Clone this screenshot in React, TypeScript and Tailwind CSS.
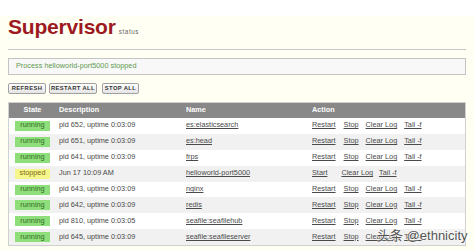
import React from "react";

type Row = {
  state: "running" | "stopped";
  desc: string;
  name: string;
};

const rows: Row[] = [
  { state: "running", desc: "pid 652, uptime 0:03:09", name: "es:elasticsearch" },
  { state: "running", desc: "pid 651, uptime 0:03:09", name: "es:head" },
  { state: "running", desc: "pid 641, uptime 0:03:09", name: "frps" },
  { state: "stopped", desc: "Jun 17 10:09 AM", name: "helloworld-port5000" },
  { state: "running", desc: "pid 643, uptime 0:03:09", name: "nginx" },
  { state: "running", desc: "pid 642, uptime 0:03:09", name: "redis" },
  { state: "running", desc: "pid 810, uptime 0:03:05", name: "seafile:seafilehub" },
  { state: "running", desc: "pid 645, uptime 0:03:09", name: "seafile:seafileserver" },
];

function Btn({ label, w }: { label: string; w: string }) {
  return (
    <div
      className={`${w} h-[11px] flex items-center justify-center rounded-[2px] border border-[#a0a0a0] bg-gradient-to-b from-white to-[#e4e4e4] text-[5.8px] font-bold tracking-[0.4px] text-[#333]`}
    >
      {label}
    </div>
  );
}

export default function App() {
  return (
    <div
      className="relative w-[474px] h-[251px] overflow-hidden bg-[#fffff3]"
      style={{ fontFamily: '"Liberation Sans", Arial, sans-serif' }}
    >
      <div className="h-[16px] bg-white" />
      <div className="px-[8px]">
        <div className="flex items-baseline leading-[21px] h-[22px]">
          <span className="text-[21px] font-bold text-[#9c1a1f] tracking-[-0.2px]">Supervisor</span>
          <span className="ml-[3px] text-[6.3px] tracking-[0.6px] text-[#666]">status</span>
        </div>
        <div className="mt-[11px] h-[1px] bg-[#c6c6c6]" />
        <div className="mt-[8px] h-[17px] flex items-center border border-[#c4c4c4] bg-[#f8f8f8] pl-[7px] text-[7.3px] text-[#5e9a4e]">
          Process helloworld-port5000 stopped
        </div>
        <div className="mt-[8px] flex">
          <Btn label="REFRESH" w="w-[38px]" />
          <div className="w-[3px]" />
          <Btn label="RESTART ALL" w="w-[48px]" />
          <div className="w-[5px]" />
          <Btn label="STOP ALL" w="w-[37px]" />
        </div>
        <div className="mt-[8px] border border-[#d0d0d0] bg-white text-[7.3px]">
          <div className="grid grid-cols-[47px_127px_126px_1fr] h-[15px] items-center bg-[#888888] text-white font-bold">
            <div className="text-center">State</div>
            <div className="pl-[3px]">Description</div>
            <div className="pl-[3px]">Name</div>
            <div className="pl-[3px]">Action</div>
          </div>
          {rows.map((r, i) => (
            <div
              key={i}
              className={`grid grid-cols-[47px_127px_126px_1fr] h-[15.9px] items-center ${
                i % 2 === 1 ? "bg-[#f1f1f1]" : "bg-white"
              }`}
            >
              <div className="flex justify-center">
                {r.state === "running" ? (
                  <span className="w-[35px] h-[10px] flex items-center justify-center bg-[#8fde7c] text-[#2f6e23]">
                    running
                  </span>
                ) : (
                  <span className="w-[35px] h-[10px] flex items-center justify-center bg-[#f7f68a] text-[#7a6a16]">
                    stopped
                  </span>
                )}
              </div>
              <div className="pl-[3px] text-[#4a4a4a]">{r.desc}</div>
              <div className="pl-[3px] text-[#4a4a4a] underline">{r.name}</div>
              <div className="pl-[3px] flex text-[#4a4a4a] underline">
                {r.state === "running" ? (
                  <>
                    <span className="mr-[8px]">Restart</span>
                    <span className="mr-[7px]">Stop</span>
                    <span className="mr-[7px]">Clear Log</span>
                    <span>Tail -f</span>
                  </>
                ) : (
                  <>
                    <span className="mr-[14px]">Start</span>
                    <span className="mr-[6px]">Clear Log</span>
                    <span>Tail -f</span>
                  </>
                )}
              </div>
            </div>
          ))}
        </div>
      </div>
      <div
        className="absolute left-[377px] top-[228px] text-[13px] leading-[16px] text-[#555] whitespace-nowrap"
        style={{
          fontFamily: '"Liberation Sans", "Noto Sans CJK SC", sans-serif',
          textShadow: "0 0 2px #fff, 0 0 2px #fff",
        }}
      >
        头条 @ethnicity
      </div>
    </div>
  );
}
